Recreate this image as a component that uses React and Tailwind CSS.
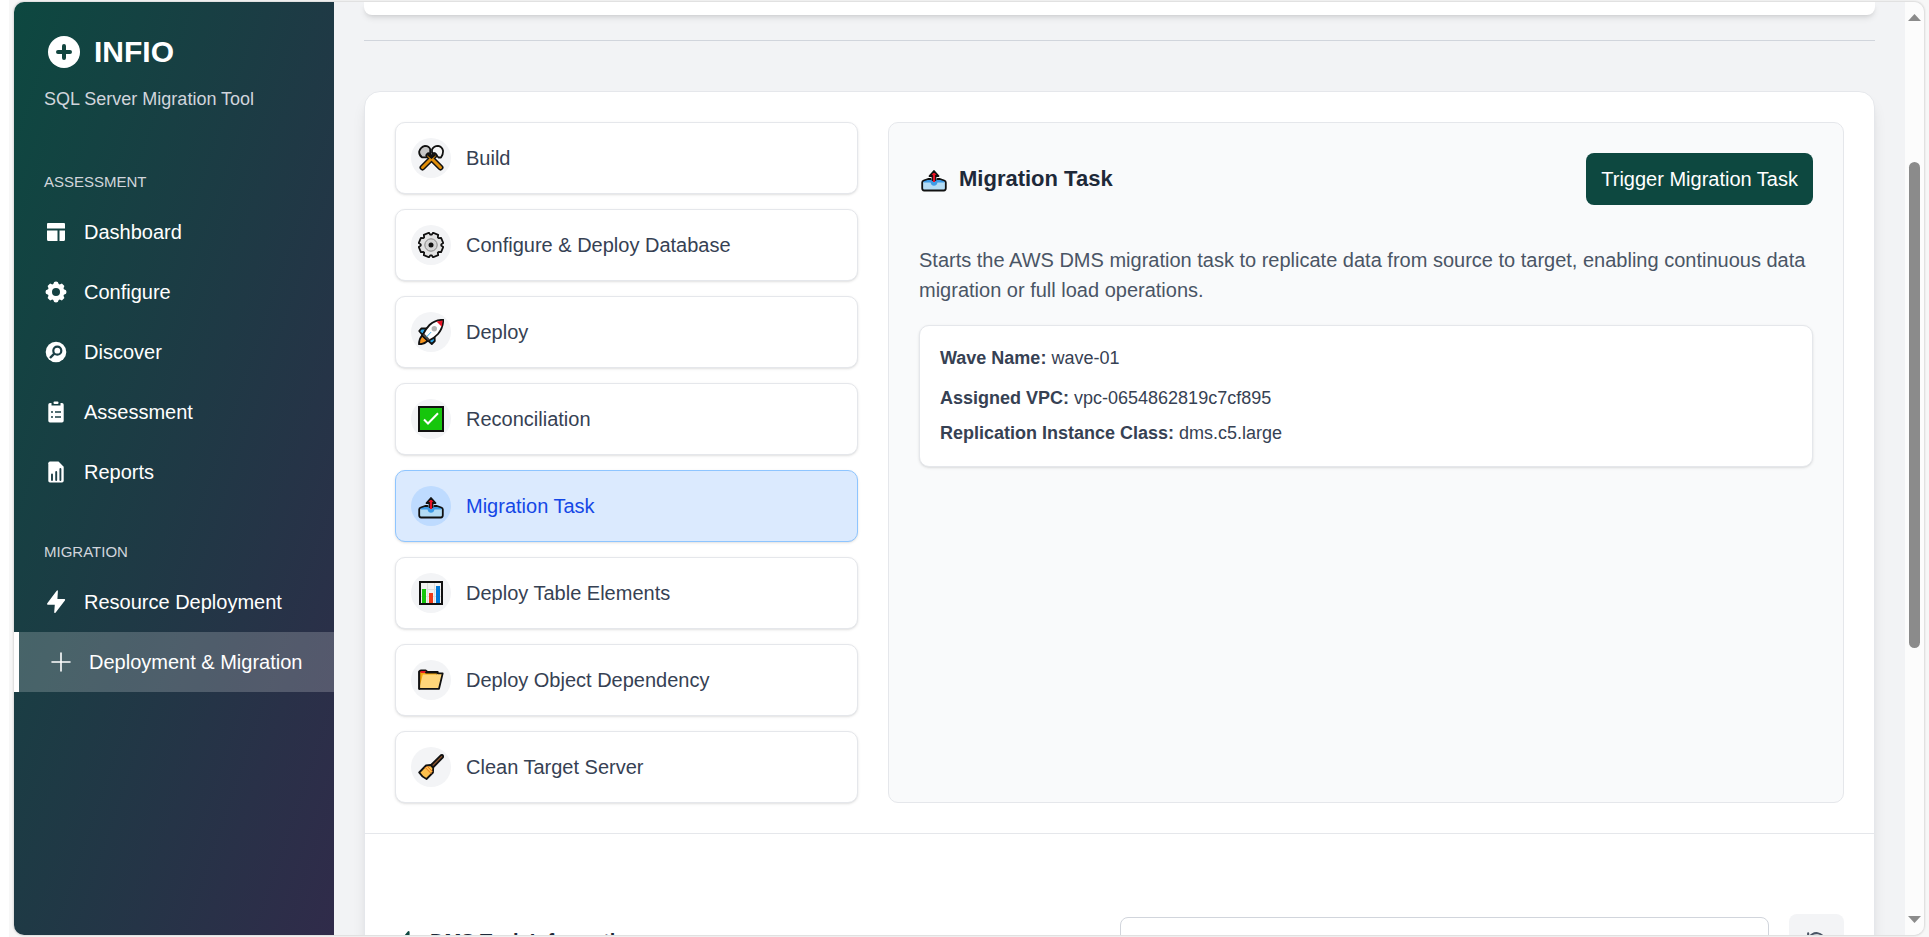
import { useState } from "react";

const stroke = { stroke: "#111", strokeWidth: 1.8, strokeLinejoin: "round", strokeLinecap: "round" };

const gearPath = (() => {
  const points = [];
  for (let i = 0; i < 8; i += 1) {
    const center = 22.5 + i * 45;
    [
      [-19, 10.3],
      [-13, 12.4],
      [13, 12.4],
      [19, 10.3],
    ].forEach(([offset, radius]) => {
      const angle = ((center + offset) * Math.PI) / 180;
      points.push(`${(13 + radius * Math.sin(angle)).toFixed(2)} ${(13 - radius * Math.cos(angle)).toFixed(2)}`);
    });
  }
  return `M${points.join("L")}Z`;
})();

function Emoji({ children }) {
  return (
    <svg viewBox="0 0 26 26" className="size-[26px]" aria-hidden="true">
      {children}
    </svg>
  );
}

function Tools() {
  return (
    <Emoji>
      <path d="M1.200 6.500Q2.500 2 7 .9q4 0 5.200 3.200v4.600L8.500 12.300H4Q.9 10 1.200 6.500z" fill="#c6c6c6" {...stroke} />
      <path d="M14 4.500Q16 1 20 .9q4 .6 5 4.600.3 4-2 7H20.500L17 8.600 14 8z" fill="#f4f4f4" {...stroke} />
      <path d="M10.500 10.500 22.500 22.500M16.500 10.500 4.500 22.500" stroke="#111" strokeWidth="6" strokeLinecap="round" />
      <path d="M10.500 10.500 22.500 22.500M16.500 10.500 4.500 22.500" stroke="#e08e0b" strokeWidth="3" strokeLinecap="round" />
      <path d="m9.500 9 4 3.500 4-3.500" fill="none" stroke="#111" strokeWidth="2.400" />
    </Emoji>
  );
}

function Gear() {
  return (
    <Emoji>
      <path d={gearPath} fill="#e3e3e3" {...stroke} />
      <circle cx="13" cy="13" r="6.200" fill="#d4d4d4" stroke="#8a8a8a" strokeWidth="1" />
      <circle cx="13" cy="13" r="2.500" fill="#111" />
    </Emoji>
  );
}

function Rocket() {
  return (
    <Emoji>
      <path d="M9 9.500 3.500 9.300 1.200 12 4.500 16z" fill="#2fa8e8" {...stroke} />
      <path d="m16.500 16.500.3 5.500-3 3-4.300-4z" fill="#2fa8e8" {...stroke} />
      <path d="M4 16.500Q1 20 1 25.200q5 .3 9-3.700z" fill="#f7941d" {...stroke} />
      <path d="M25.200.8Q17 .8 11.500 6 7 10.500 4.500 16.500L10 22q6-2.500 10-7 5.200-6 5.200-14.200z" fill="#fff" {...stroke} />
      <path d="M18.500 2.400 23.800 7.700l.8-6.300z" fill="#e81224" />
      <circle cx="16.300" cy="9.800" r="2.700" fill="#b5b5b5" />
      <path d="m4.800 16.200 5.300 5.300 1.900-1.100-5.800-6z" fill="#444" />
      <path d="m8.500 18 4.500-4.800" stroke="#2fa8e8" strokeWidth="1" />
    </Emoji>
  );
}

function Check() {
  return (
    <Emoji>
      <rect x="1" y="1" width="24" height="24" fill="#16c60c" stroke="#111" strokeWidth="2" />
      <path d="m6 13.500 4 4L20 7.200" fill="none" stroke="#fff" strokeWidth="2" />
    </Emoji>
  );
}

function Outbox() {
  return (
    <Emoji>
      <path d="M1.200 15.500 5 13h16l3.800 2.500v7q0 2-2 2H3.200q-2 0-2-2z" fill="#b4dcf5" />
      <path d="M2 15.300 6 13.300h14l4 2q0 1-1 1.200h-6.500q-.8 3.200-3.500 3.200t-3.500-3.200H3q-1-.2-1-1.200z" fill="#3f9be6" />
      <path d="M9.500 13H7l-4.300 1.500Q1.200 15 1.200 16.500v5.800q0 2.200 2 2.200h19.600q2 0 2-2.200v-5.800q0-1.500-1.500-2L19 13h-2.500" fill="none" {...stroke} />
      <path d="m13 5-4.500 5h3V14h3V10h3z" fill="#e81224" {...stroke} />
      <path d="M13 7V16" stroke="#e81224" strokeWidth="2.200" />
    </Emoji>
  );
}

function Chart() {
  return (
    <Emoji>
      <rect x="2" y="2" width="22" height="22" fill="#f2f2f2" stroke="#111" strokeWidth="2" />
      <path d="M9.500 3v20M16.500 3v20M3 9.500h20M3 16.500h20" stroke="#ddd" strokeWidth="1" />
      <path d="M4 9h4v14H4z" fill="#16c60c" />
      <path d="M11 13h4v10h-4z" fill="#f03a17" />
      <path d="M18 6h4v17h-4z" fill="#0078d7" />
    </Emoji>
  );
}

function Folder() {
  return (
    <Emoji>
      <path d="M1.200 21.800V4.500q1-1 2-1h4.500l1.500 1.300h10.500V8z" fill="#f5a60d" {...stroke} />
      <path d="M2.500 5h5.500" stroke="#e81224" strokeWidth="1.800" />
      <path d="M4.800 7.500h14l1-1.200h4.900L21 21.800H1.200z" fill="#ffd67a" />
      <path d="M8 5.500h11l1 .9h4.700L21 21.800H1.200V5" fill="none" {...stroke} />
    </Emoji>
  );
}

function Broom() {
  return (
    <Emoji>
      <path d="m13 11 10-9.800q1.500-.5 2 .5.400 1.200-.3 2L15 13.500z" fill="#8e562e" {...stroke} />
      <path d="m8 11.500 4.500-.5 2.700 2.800-.2 4.700-6.500 6.500q-4.500-2-7.300-6.500z" fill="#fdc04c" {...stroke} />
      <path d="m6.800 13 6.500 6.700M9 12l5.500 5.700" stroke="#e8711d" strokeWidth="1" />
    </Emoji>
  );
}

function NavIcon({ children }) {
  return (
    <svg viewBox="0 0 24 24" fill="currentColor" className="size-6 shrink-0" aria-hidden="true">
      {children}
    </svg>
  );
}

const LayoutIcon = () => (
  <NavIcon>
    <path d="M4 3h16q1 0 1 1v4.500H3V4q0-1 1-1zM3 10.500h10.500V21H4.500q-1.500 0-1.500-1.500zM15.500 10.500H21v9q0 1.500-1.500 1.500h-4z" />
  </NavIcon>
);

const CogIcon = () => (
  <NavIcon>
    <path
      fillRule="evenodd"
      d="m10.200 2 1.800-.5 1.800.5.900 2.100 1 .4 2.200-.9 2.500 2.500-.9 2.200.4 1 2.100.9.500 1.800-.5 1.800-2.100.9-.4 1 .9 2.200-2.500 2.500-2.200-.9-1 .4-.9 2.100-1.800.5-1.800-.5-.9-2.100-1-.4-2.200.9-2.500-2.500.9-2.200-.4-1L2 13.800 1.500 12l.5-1.800 2.100-.9.400-1-.9-2.200 2.500-2.500 2.200.9 1-.4zM12 8a4 4 0 1 0 0 8 4 4 0 0 0 0-8z"
    />
  </NavIcon>
);

const SearchIcon = () => (
  <NavIcon>
    <circle cx="12" cy="12" r="10.300" />
    <circle cx="13.300" cy="10.700" r="4" fill="none" stroke="#1b3f46" strokeWidth="2.200" />
    <path d="m10.300 13.700-4.300 4.300" stroke="#1b3f46" strokeWidth="2.400" />
  </NavIcon>
);

const ClipboardIcon = () => (
  <NavIcon>
    <path d="M6 3h1.500v2.500h9V3H18q1.700 0 1.700 1.700v16.100q0 1.700-1.700 1.700H6q-1.700 0-1.700-1.700V4.700Q4.300 3 6 3z" />
    <rect x="9.500" y="1.500" width="5" height="2.600" rx="1" />
    <path d="M7 12h2M11 12h6M7 17h2M11 17h6" stroke="#1c4046" strokeWidth="1.700" />
  </NavIcon>
);

const ReportIcon = () => (
  <NavIcon>
    <path d="M6 1.500h8.500l5.200 5.300v14q0 1.700-1.700 1.700H6q-1.700 0-1.700-1.700V3.200Q4.300 1.500 6 1.500z" />
    <path d="M8 14.500V20M12.200 12V20M16.400 9V20" stroke="#1e3f47" strokeWidth="1.900" strokeLinecap="round" />
  </NavIcon>
);

const BoltIcon = () => (
  <NavIcon>
    <path d="M12.500.9q1.300-1.200 1.400.3l-.5 7.800h7q1.200.3.500 1.500L11.500 22.700q-1.200 1-1.300-.4l.6-7.500H3.800q-1.200-.3-.5-1.500z" />
  </NavIcon>
);

const PlusIcon = () => (
  <NavIcon>
    <path d="M12 3v18M3 12h18" stroke="currentColor" strokeWidth="1.600" strokeLinecap="round" />
  </NavIcon>
);

const navGroups = [
  {
    title: "ASSESSMENT",
    items: [
      { label: "Dashboard", Icon: LayoutIcon },
      { label: "Configure", Icon: CogIcon },
      { label: "Discover", Icon: SearchIcon },
      { label: "Assessment", Icon: ClipboardIcon },
      { label: "Reports", Icon: ReportIcon },
    ],
  },
  {
    title: "MIGRATION",
    items: [
      { label: "Resource Deployment", Icon: BoltIcon },
      { label: "Deployment & Migration", Icon: PlusIcon, active: true },
    ],
  },
];

const steps = [
  { label: "Build", Icon: Tools },
  { label: "Configure & Deploy Database", Icon: Gear },
  { label: "Deploy", Icon: Rocket },
  { label: "Reconciliation", Icon: Check },
  { label: "Migration Task", Icon: Outbox },
  { label: "Deploy Table Elements", Icon: Chart },
  { label: "Deploy Object Dependency", Icon: Folder },
  { label: "Clean Target Server", Icon: Broom },
];

function Sidebar() {
  return (
    <aside className="w-80 shrink-0 bg-linear-to-br/srgb from-[#0d4840] to-[#302b4a] text-white">
      <div className="px-[30px] pt-[30px]">
        <div className="flex items-center gap-[10px]">
          <svg viewBox="0 0 40 40" className="size-10" aria-hidden="true">
            <circle cx="20" cy="20" r="16" fill="#fff" />
            <path d="M20 14v12M14 20h12" stroke="#12453f" strokeWidth="4" strokeLinecap="round" />
          </svg>
          <h1 className="text-[30px] leading-10 font-bold">INFIO</h1>
        </div>
        <p className="mt-[15px] text-[18px] leading-[25px] text-gray-300">SQL Server Migration Tool</p>
      </div>
      <nav className="mt-[60px] flex flex-col gap-10">
        {navGroups.map((group) => (
          <section key={group.title}>
            <h2 className="px-[30px] pb-[10px] text-[15px] leading-5 text-gray-300">{group.title}</h2>
            {group.items.map(({ label, Icon, active }) => (
              <a
                key={label}
                href="#"
                aria-current={active ? "page" : undefined}
                className={
                  active
                    ? "flex h-[60px] items-center gap-4 border-l-[5px] border-white bg-white/20 px-[30px] text-xl whitespace-nowrap"
                    : "flex h-[60px] items-center gap-4 px-[30px] text-xl whitespace-nowrap"
                }
              >
                <Icon />
                {label}
              </a>
            ))}
          </section>
        ))}
      </nav>
    </aside>
  );
}

function Scrollbar() {
  return (
    <div className="flex w-[19px] shrink-0 flex-col items-center bg-[#fcfcfc] py-3" aria-hidden="true">
      <svg viewBox="0 0 13 7" className="h-[7px] w-[13px] fill-[#8b8b8b]">
        <path d="M6.500 0 13 7H0z" />
      </svg>
      <div className="grow-10" />
      <div className="h-[53.5%] w-[11px] rounded-full bg-[#8b8b8b]" />
      <div className="grow-19" />
      <svg viewBox="0 0 13 7" className="h-[7px] w-[13px] fill-[#8b8b8b]">
        <path d="M0 0h13L6.500 7z" />
      </svg>
    </div>
  );
}

export default function App() {
  const [selected, setSelected] = useState("Migration Task");
  return (
    <div className="h-screen bg-white pl-[9px] font-['Liberation_Sans',Arial,sans-serif]">
      <div className="h-full bg-[#f7f7f7] px-[5px] py-[2px]">
        <div className="flex h-full overflow-hidden rounded-[10px] bg-[#f2f3f5] shadow-[0_0_2px_1px_rgba(0,0,0,0.12)]">
          <Sidebar />
          <main className="min-w-0 grow overflow-hidden px-[30px]">
            <div className="h-[13px] rounded-b-lg bg-white shadow-md" />
            <hr className="mt-[25px] border-gray-300" />
            <div className="mt-[50px] rounded-2xl border border-gray-200 bg-white shadow-lg">
              <div className="grid grid-cols-3 gap-[30px] p-[30px]">
                <div className="flex flex-col gap-[15px]">
                  {steps.map(({ label, Icon }) => {
                    const on = label === selected;
                    return (
                      <button
                        key={label}
                        type="button"
                        aria-pressed={on}
                        onClick={() => setSelected(label)}
                        className={
                          on
                            ? "flex h-[72px] items-center gap-[15px] rounded-[10px] border border-blue-300 bg-blue-100 px-[15px] text-xl text-blue-700 shadow-sm"
                            : "flex h-[72px] items-center gap-[15px] rounded-[10px] border border-gray-200 bg-white px-[15px] text-xl text-gray-700 shadow-sm"
                        }
                      >
                        <span
                          className={
                            on
                              ? "flex size-10 items-center justify-center rounded-full bg-blue-200"
                              : "flex size-10 items-center justify-center rounded-full bg-gray-100"
                          }
                        >
                          <Icon />
                        </span>
                        {label}
                      </button>
                    );
                  })}
                </div>
                <section className="col-span-2 rounded-[10px] border border-gray-200 bg-gray-50 p-[30px]">
                  <div className="flex items-center justify-between">
                    <h2 className="flex items-center gap-[10px] text-[22px] leading-8 font-bold text-gray-800">
                      <span className="flex size-[30px] items-center justify-center">
                        <Outbox />
                      </span>
                      Migration Task
                    </h2>
                    <button type="button" className="h-[52px] rounded-lg bg-[#0d4840] px-[15px] text-xl text-white">
                      Trigger Migration Task
                    </button>
                  </div>
                  <p className="mt-10 text-xl leading-[30px] text-gray-600">
                    Starts the AWS DMS migration task to replicate data from source to target, enabling continuous data
                    migration or full load operations.
                  </p>
                  <div className="mt-5 rounded-[10px] border border-gray-200 bg-white p-5 text-[18px] leading-[25px] text-gray-700 shadow-sm">
                    <p>
                      <strong>Wave Name:</strong> wave-01
                    </p>
                    <p className="mt-[15px]">
                      <strong>Assigned VPC:</strong> vpc-0654862819c7cf895
                    </p>
                    <p className="mt-[10px]">
                      <strong>Replication Instance Class:</strong> dms.c5.large
                    </p>
                  </div>
                </section>
              </div>
              <div className="flex items-center gap-5 border-t border-gray-200 px-[30px] pt-20">
                <h2 className="flex grow items-center gap-[10px] text-xl font-bold text-gray-800">
                  <svg
                    viewBox="0 0 24 24"
                    className="size-[25px] fill-none stroke-[#0d4840] stroke-2"
                    strokeLinecap="round"
                    strokeLinejoin="round"
                    aria-hidden="true"
                  >
                    <path d="M13 10V3L4 14h7v7l9-11h-7z" />
                  </svg>
                  DMS Task Information
                </h2>
                <input
                  type="text"
                  aria-label="Search tasks"
                  className="h-12 w-[649px] rounded-lg border border-gray-300 bg-white px-4 text-xl"
                />
                <button
                  type="button"
                  aria-label="Refresh"
                  className="flex h-[54px] w-[55px] items-center justify-center rounded-lg bg-gray-100"
                >
                  <svg
                    viewBox="0 0 24 24"
                    className="size-[25px] fill-none stroke-gray-600 stroke-2"
                    strokeLinecap="round"
                    strokeLinejoin="round"
                    aria-hidden="true"
                  >
                    <path d="M4 4v5h.582m15.356 2A8.001 8.001 0 0 0 4.582 9m0 0H9m11 11v-5h-.581m0 0a8.003 8.003 0 0 1-15.357-2m15.357 2H15" />
                  </svg>
                </button>
              </div>
            </div>
          </main>
          <Scrollbar />
        </div>
      </div>
    </div>
  );
}
